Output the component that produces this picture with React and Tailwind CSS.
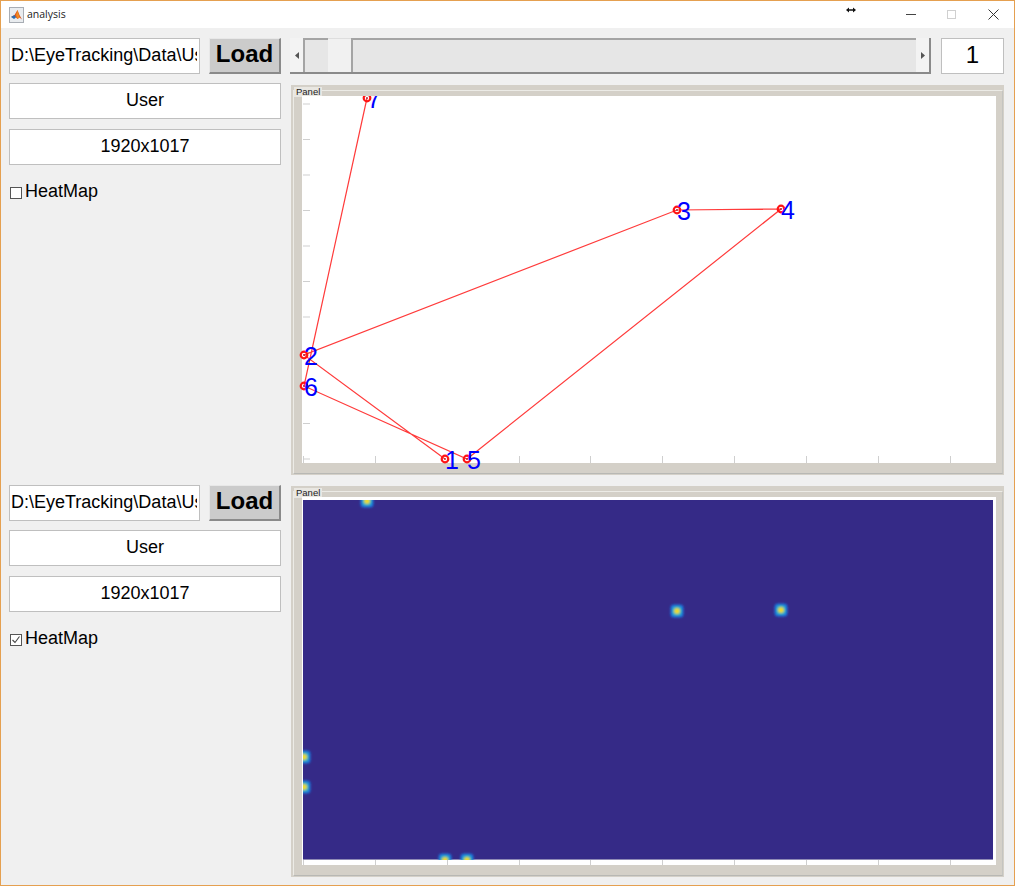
import React from "react";

const FONT = "font-['Liberation_Sans',Arial,sans-serif]";
const pts = [
  [445, 459, "1"],
  [304, 355, "2"],
  [677, 210, "3"],
  [781, 209, "4"],
  [467, 459, "5"],
  [304, 386, "6"],
  [367, 98, "7"],
];
const OX = 302;
const xTicks = [303, 375, 447, 519, 590, 662, 734, 806, 878, 950];
const yTicks = [104, 139.5, 175, 210.5, 246, 281.5, 317, 352.5, 388, 423.5, 459];

function Ticks({ top, bottom }) {
  return (
    <g stroke="#cfcfcf" strokeWidth="1">
      {xTicks.map((x) => (
        <line key={x} x1={x - OX + 0.5} x2={x - OX + 0.5} y1={bottom - 7} y2={bottom} />
      ))}
      {yTicks.map((y) => (
        <line key={y} x1="1" x2="8" y1={y - top} y2={y - top} />
      ))}
    </g>
  );
}

function ScatterPlot() {
  const top = 96;
  return (
    <svg width="694" height="367" className="block" style={{ overflow: "visible" }}>
      <defs>
        <clipPath id="plotClip">
          <rect x="-10" y="0" width="710" height="385" />
        </clipPath>
      </defs>
      <Ticks top={top} bottom={367} />
      <g clipPath="url(#plotClip)">
        <polyline
          points={pts.map((p) => `${p[0] - OX},${p[1] - top}`).join(" ")}
          fill="none"
          stroke="#ff3b3b"
          strokeWidth="1.2"
        />
        {pts.map((p) => (
          <g key={p[2]}>
            <circle cx={p[0] - OX} cy={p[1] - top} r="3.3" fill="none" stroke="#ff1414" strokeWidth="2.2" />
            <circle cx={p[0] - OX} cy={p[1] - top} r="0.9" fill="#b02038" />
            <text
              x={p[0] - OX}
              y={p[1] - top + 10}
              fill="#0000ff"
              fontSize="25"
              fontFamily="'Liberation Sans', Arial, sans-serif"
            >
              {p[2]}
            </text>
          </g>
        ))}
      </g>
    </svg>
  );
}

function HeatMapPlot() {
  const spots = [
    [367, 501],
    [677, 611],
    [781, 610],
    [304, 757],
    [304, 787],
    [445, 860],
    [467, 860],
  ];
  const top = 497;
  return (
    <svg width="694" height="368" className="block" style={{ overflow: "hidden" }}>
      <defs>
        <clipPath id="img">
          <rect x="1" y="3" width="690" height="360" />
        </clipPath>
        <filter id="soft" x="-50%" y="-50%" width="200%" height="200%">
          <feGaussianBlur stdDeviation="0.9" />
        </filter>
      </defs>
      <Ticks top={top} bottom={368} />
      <g clipPath="url(#img)">
        <rect x="1" y="3" width="690" height="360" fill="#352a87" />
        <rect x="1" y="362" width="690" height="1" fill="#8f8ab5" />
        {spots.map((s, i) => {
          const x = s[0] - OX;
          const y = s[1] - top;
          return (
            <g key={i} filter="url(#soft)">
              <rect x={x - 6.5} y={y - 6.5} width="13" height="13" rx="3.5" fill="#1e74dc" />
              <rect x={x - 4.8} y={y - 4.8} width="9.6" height="9.6" rx="3.5" fill="#18a8d0" />
              <circle cx={x} cy={y} r="3.8" fill="#58c098" />
              <circle cx={x} cy={y} r="2.8" fill="#e4d034" />
              <circle cx={x} cy={y} r="1.6" fill="#fde416" />
            </g>
          );
        })}
      </g>
    </svg>
  );
}

function Panel({ className, children }) {
  return (
    <div className={`relative w-[713px] bg-[#d4d0c8] ${className}`}>
      <div className="absolute left-[2px] right-[1px] top-[5px] bottom-[1px] border border-[#ecebe6] border-b-[#b8b8b4] border-r-[#c4c4c0]" />
      <div className="absolute left-[3px] top-[2px] px-[2px] h-[10px] leading-[10px] text-[9.5px] text-[#222] bg-[#e9e7e2]">
        Panel
      </div>
      <div className="relative pl-[11px] pt-[11px] pr-[8px] pb-[11px]">
        <div className="bg-white">{children}</div>
      </div>
    </div>
  );
}

function Field({ children, className = "" }) {
  return (
    <div
      className={`h-[36px] pb-[2px] bg-white border border-[#bfbfbf] flex items-center justify-center text-[18px] text-black ${className}`}
    >
      {children}
    </div>
  );
}

function Controls({ checked }) {
  return (
    <div className="w-[272px] flex flex-col">
      <div className="flex gap-[9px]">
        <div className="w-[191px] h-[36px] pb-[2px] bg-white border border-[#bfbfbf] flex items-center pl-[1px] text-[18px] text-black whitespace-nowrap">
          <span className="block w-[186px] overflow-hidden">D:\EyeTracking\Data\User</span>
        </div>
        <button className="w-[72px] h-[36px] pb-[3px] bg-[#cbcbcb] border-r-2 border-b-2 border-[#8a8a8a] border-t border-l border-t-[#e8e8e8] border-l-[#e8e8e8] text-[24px] font-bold text-black leading-none">
          Load
        </button>
      </div>
      <Field className="mt-[9px]">User</Field>
      <Field className="mt-[10px]">1920x1017</Field>
      <div className="mt-[14px] flex items-center h-[24px] text-[18px] text-black">
        <span className="w-[12px] h-[12px] mt-[4px] ml-px border border-[#555] bg-white flex items-center justify-center">
          {checked && (
            <svg width="10" height="10" viewBox="0 0 10 10">
              <path d="M1.5 5 L4 7.5 L8.5 1.5" fill="none" stroke="#444" strokeWidth="1.1" />
            </svg>
          )}
        </span>
        <span className="ml-[3px]">HeatMap</span>
      </div>
    </div>
  );
}

function Slider() {
  return (
    <div className="w-[641px] h-[36px] flex border-r-2 border-b-2 border-[#8a8a8a]">
      <div className="w-[13px] bg-[#f3f3f3] flex items-center justify-center">
        <svg width="4" height="7"><path d="M4 0 V7 L0 3.5 Z" fill="#555" /></svg>
      </div>
      <div className="w-[25px] bg-[#e6e6e6] border-l-2 border-t-2 border-[#a4a4a4]" />
      <div className="w-[23px] bg-[#f1f1f1] border-t border-[#dedede]" />
      <div className="flex-1 bg-[#e6e6e6] border-l-2 border-t-2 border-[#a4a4a4]" />
      <div className="w-[13px] bg-[#f3f3f3] flex items-center justify-center">
        <svg width="4" height="7"><path d="M0 0 V7 L4 3.5 Z" fill="#555" /></svg>
      </div>
    </div>
  );
}

export default function App() {
  return (
    <div className={`w-[1015px] h-[886px] overflow-hidden bg-[#f0f0f0] border border-[#e5a050] flex flex-col ${FONT}`}>
      <div className="h-[27px] bg-white flex items-center pl-[8px] shrink-0">
        <svg width="15" height="16" viewBox="0 0 15 16">
          <rect x="0.5" y="0.5" width="14" height="15" fill="#e9ecef" stroke="#a8adb4" />
          <path d="M2 10 L5.5 8 L8.5 3 L10.5 8 L13 12.5 L10.5 10.5 L8.5 12 L6.5 10 Z" fill="#e0561c" />
          <path d="M2 10 L5.5 8 L7 10.5 L5 12 Z" fill="#2a6db2" />
          <path d="M8.5 3 L7 8 L8.5 12 L10.5 10.5 Z" fill="#f08a20" />
        </svg>
        <span className="ml-[3px] text-[10.5px] text-[#222] font-['Open_Sans',sans-serif]">analysis</span>
        <span className="ml-auto flex items-center text-[#222]">
          <svg width="10" height="6" viewBox="0 0 10 6" className="mr-[50px] mb-[9px]">
            <path d="M0 3 L3 0.5 V2.3 H7 V0.5 L10 3 L7 5.5 V3.7 H3 V5.5 Z" fill="#111" />
          </svg>
          <span className="w-[10px] h-px bg-[#444] mr-[31px]" />
          <span className="w-[9px] h-[9px] border border-[#d0d0d0] mr-[32px]" />
          <svg width="11" height="11" viewBox="0 0 11 11" className="mr-[15px]">
            <path d="M0.5 0.5 L10.5 10.5 M10.5 0.5 L0.5 10.5" stroke="#333" strokeWidth="1" />
          </svg>
        </span>
      </div>
      <div className="pl-[8px] pt-[10px] flex flex-col">
        <div className="flex gap-[9px]">
          <Controls checked={false} />
          <div className="flex flex-col">
            <div className="flex items-start gap-[10px]">
              <Slider />
              <div className="w-[63px] h-[36px] pb-[3px] bg-white border border-[#bfbfbf] flex items-center justify-center text-[24px] text-black">
                1
              </div>
            </div>
            <Panel className="mt-[11px] ml-px h-[390px]">
              <ScatterPlot />
            </Panel>
          </div>
        </div>
        <div className="flex gap-[9px] mt-[10px]">
          <Controls checked={true} />
          <Panel className="ml-px mt-px h-[391px]">
            <HeatMapPlot />
          </Panel>
        </div>
      </div>
    </div>
  );
}
